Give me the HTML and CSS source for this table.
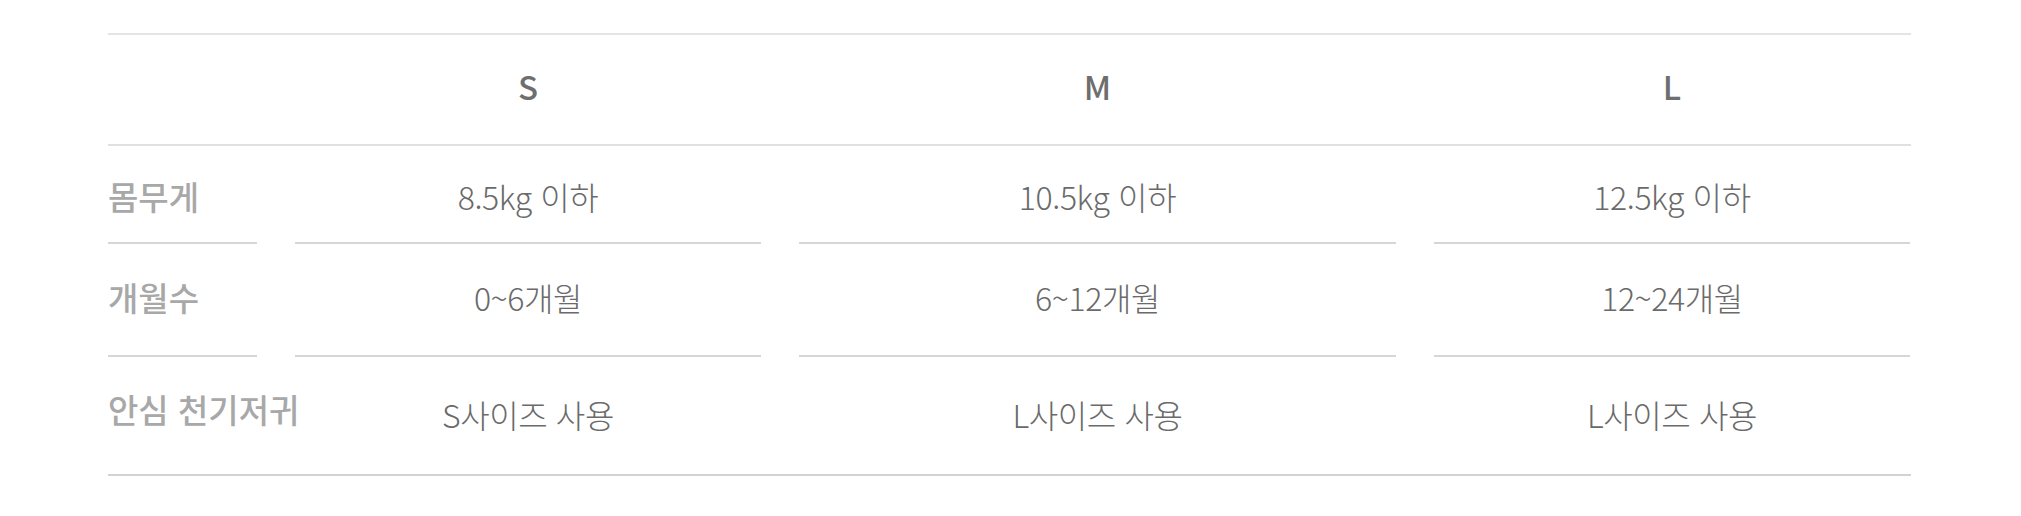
FILE: index.html
```html
<!DOCTYPE html>
<html lang="ko">
<head>
<meta charset="utf-8">
<title>사이즈 표</title>
<link rel="stylesheet" href="styles.css">
</head>
<body>
<div class="page">
  <div class="size-table">
    <div class="row head">
      <div class="cell label"></div>
      <div class="cell col-s">S</div>
      <div class="cell col-m">M</div>
      <div class="cell col-l">L</div>
    </div>
    <div class="row body r1">
      <div class="cell label">몸무게</div>
      <div class="cell val">8.5kg 이하</div>
      <div class="cell val">10.5kg 이하</div>
      <div class="cell val">12.5kg 이하</div>
    </div>
    <div class="row body r2">
      <div class="cell label">개월수</div>
      <div class="cell val">0~6개월</div>
      <div class="cell val">6~12개월</div>
      <div class="cell val">12~24개월</div>
    </div>
    <div class="row body r3 last">
      <div class="cell label">안심 천기저귀</div>
      <div class="cell val">S사이즈 사용</div>
      <div class="cell val">L사이즈 사용</div>
      <div class="cell val">L사이즈 사용</div>
    </div>
  </div>
</div>
</body>
</html>
```

FILE: styles.css
```css
* { box-sizing: border-box; }

html, body {
  margin: 0;
  padding: 0;
  background: #ffffff;
}

body {
  font-family: "Noto Sans CJK KR", "Noto Sans", sans-serif;
}

.page {
  padding: 33px 0 0 108px;
}

.size-table {
  width: 1803px;
  border-top: 2px solid #e4e4e4;
  border-bottom: 2px solid #d2d2d2;
}

.row {
  display: grid;
  grid-template-columns: 149px 466px 597px 476px;
  column-gap: 38px;
  align-items: stretch;
}

.head {
  height: 111px;
  border-bottom: 2px solid #e0e0e0;
}

.cell {
  display: flex;
  align-items: center;
  justify-content: center;
  white-space: nowrap;
}

.head .cell {
  font-size: 33px;
  font-weight: 500;
  color: #6e6e6e;
  padding-bottom: 8px;
}

.body .cell {
  border-bottom: 2px solid #d6d6d6;
  font-size: 32px;
  font-weight: 300;
  color: #6a6a6a;
  letter-spacing: -0.4px;
}

.body.last .cell {
  border-bottom: 0;
}

.body .cell.label {
  justify-content: flex-start;
  font-size: 33px;
  font-weight: 500;
  color: #a8a8a8;
  letter-spacing: 0;
  overflow: visible;
}

.r1 { height: 98px; }
.r1 .cell { padding-top: 4px; }

.r2 { height: 113px; }
.r2 .cell { padding-bottom: 5px; }

.r3 { height: 117px; }
.r3 .cell { padding-bottom: 4px; }
.r3 .cell.label { padding-bottom: 14px; }
```
